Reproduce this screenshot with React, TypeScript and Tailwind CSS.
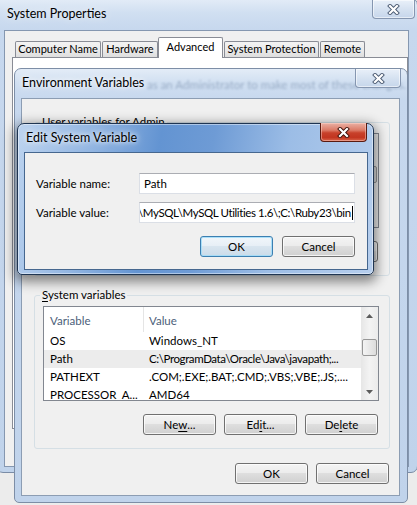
import React from "react";

const btnBase =
  "flex h-[21px] w-[73px] shrink-0 items-center justify-center rounded-[3px] border text-[11.5px] leading-none text-black";
const btnNormal =
  "border-[#707070] bg-[linear-gradient(180deg,#f4f4f4_0%,#ececec_45%,#dedede_50%,#d0d0d0_100%)] shadow-[inset_0_0_0_1px_rgba(255,255,255,0.75)]";
const btnDefault =
  "border-[#3c7fb1] bg-[linear-gradient(180deg,#f1f6fa_0%,#e7eff6_45%,#d8e5ef_50%,#cbdbe9_100%)] shadow-[inset_0_0_0_1px_rgba(160,220,248,0.85)]";

function Button({ children, def }: { children?: React.ReactNode; def?: boolean }) {
  return <div className={`${btnBase} ${def ? btnDefault : btnNormal}`}>{children}</div>;
}

function U({ children }: { children: React.ReactNode }) {
  return <span className="underline underline-offset-[2px]">{children}</span>;
}

function XGlyph({ dark }: { dark: string }) {
  return (
    <svg width="13" height="11" viewBox="0 0 13 11">
      <path d="M3 2 L10 9 M10 2 L3 9" stroke={dark} strokeWidth="4" strokeLinecap="square" fill="none" />
      <path d="M3 2 L10 9 M10 2 L3 9" stroke="#ffffff" strokeWidth="2.2" strokeLinecap="square" fill="none" />
    </svg>
  );
}

function Arrow({ up }: { up?: boolean }) {
  return (
    <svg width="7" height="4" viewBox="0 0 7 4">
      <polygon points={up ? "0,4 7,4 3.5,0" : "0,0 7,0 3.5,4"} fill="#5c5c5c" />
    </svg>
  );
}

type Row = { name: string; value: string; tight?: boolean };

function ListView({ rows, highlight, header }: { rows: Row[]; highlight?: number; header: boolean }) {
  return (
    <div className="flex h-[95px] border border-[#828790] bg-white">
      <div className="flex min-w-0 flex-1 flex-col overflow-hidden">
        {header && (
          <div className="flex h-[25px] shrink-0 text-[#4c607a]">
            <div className="flex h-full w-[100px] shrink-0 items-center border-r border-[#e5e5e5] pl-[6px] pt-[3px]">
              Variable
            </div>
            <div className="flex h-full items-center pl-[5px] pt-[3px]">Value</div>
          </div>
        )}
        {rows.map((r, i) => (
          <div
            key={i}
            className={`flex h-[18px] shrink-0 items-center whitespace-nowrap ${
              i === highlight ? "bg-[#ececec]" : ""
            }`}
          >
            <div className="w-[100px] shrink-0 pl-[6px]">{r.name}</div>
            <div className={`pl-[5px] ${r.tight ? "tracking-[-0.4px]" : ""}`}>{r.value}</div>
          </div>
        ))}
      </div>
      <div className="flex w-[17px] shrink-0 flex-col bg-[linear-gradient(90deg,#e6e6e6_0%,#f3f3f3_50%,#ebebeb_100%)]">
        <div className="flex h-[17px] shrink-0 items-center justify-center">
          <Arrow up />
        </div>
        <div className="flex flex-1 flex-col">
          <div className="mx-[1px] mt-[15px] h-[17px] rounded-[2px] border border-[#979797] bg-[linear-gradient(90deg,#f4f4f4_0%,#e8e8e8_50%,#dcdcdc_100%)]" />
        </div>
        <div className="flex h-[17px] shrink-0 items-center justify-center">
          <Arrow />
        </div>
      </div>
    </div>
  );
}

function VarGroup({
  legend,
  rows,
  highlight,
  header,
  covered,
  className,
}: {
  legend: React.ReactNode;
  rows: Row[];
  highlight?: number;
  header: boolean;
  covered?: boolean;
  className: string;
}) {
  return (
    <fieldset className={`ml-[12px] mr-[9px] rounded-[3px] border border-[#d5dfe5] pb-[13px] pl-[8px] pr-[10px] ${className}`}>
      <legend className="ml-[-3px] px-[2px] text-[11.5px] leading-[14px]">{legend}</legend>
      <div className="mt-[4px]">
        <ListView rows={rows} highlight={highlight} header={header} />
      </div>
      <div className="mr-[1px] mt-[13px] flex justify-end gap-[8px]">
        {covered ? (
          <>
            <Button />
            <Button />
            <Button />
          </>
        ) : (
          <>
            <Button>
              Ne<U>w</U>...
            </Button>
            <Button>
              Ed<U>i</U>t...
            </Button>
            <Button>
              De<U>l</U>ete
            </Button>
          </>
        )}
      </div>
    </fieldset>
  );
}

const inactiveFrame =
  "bg-[linear-gradient(180deg,#e3ecf7_0px,#d0dff1_14px,#c7d8ee_30px,#c0d3eb_100%)]";
const activeFrame =
  "bg-[linear-gradient(100deg,#bcd3ef_0%,#93b6e2_20%,#6394d2_38%,#6e9bd5_52%,#9cbde6_72%,#b6ceed_100%)]";

const inactiveClose =
  "absolute flex h-[19px] items-center justify-center rounded-b-[4px] border border-t-0 border-[#8596b0] bg-[linear-gradient(180deg,#e9f0f9_0%,#d6e2f1_50%,#c6d6eb_100%)] shadow-[inset_0_0_0_1px_rgba(255,255,255,0.55)]";

const tabIdle =
  "flex h-[16px] items-center justify-center rounded-t-[2px] border border-b-0 border-[#898c95] bg-[linear-gradient(180deg,#f3f3f3_0%,#ebebeb_50%,#dedede_100%)] text-[11px]";

export default function App() {
  const sysRows: Row[] = [
    { name: "OS", value: "Windows_NT" },
    { name: "Path", value: "C:\\ProgramData\\Oracle\\Java\\javapath;...", tight: true },
    { name: "PATHEXT", value: ".COM;.EXE;.BAT;.CMD;.VBS;.VBE;.JS;...." },
    { name: "PROCESSOR_A...", value: "AMD64" },
  ];

  return (
    <div className="relative h-[505px] w-[417px] overflow-hidden bg-[#ececec] font-['Lato',sans-serif] text-[11.5px] text-black">
      {/* System Properties window */}
      <div
        className={`absolute left-[-4px] top-[-2px] flex h-[475px] w-[422px] flex-col rounded-[7px] border border-[#7a8ca6] ${inactiveFrame}`}
      >
        <div className="flex h-[31px] shrink-0 items-center pl-[10px] text-[12.5px] text-black [text-shadow:0_0_8px_rgba(255,255,255,0.9)]">
          System Properties
        </div>
        <div className={`${inactiveClose} right-[2px] top-[1px] w-[43px]`}>
          <XGlyph dark="#4b5b73" />
        </div>
        <div className="mb-[5px] ml-[7px] mr-[8px] flex flex-1 flex-col border border-[#8597b0] bg-[#f0f0f0]">
          <div className="flex h-[26px] shrink-0 items-end pl-[10px]">
            <div className={`${tabIdle} w-[86px]`}>Computer Name</div>
            <div className={`${tabIdle} ml-[1px] w-[56px]`}>Hardware</div>
            <div className="relative z-10 mb-[-1px] flex h-[21px] w-[65px] items-center justify-center rounded-t-[2px] border border-b-0 border-[#898c95] bg-white pb-[2px] text-[11px]">
              Advanced
            </div>
            <div className={`${tabIdle} ml-[1px] w-[95px]`}>System Protection</div>
            <div className={`${tabIdle} ml-[1px] w-[45px]`}>Remote</div>
          </div>
          <div className="ml-[7px] h-[372px] shrink-0 border border-[#898c95] bg-white" />
        </div>
      </div>

      {/* Environment Variables window */}
      <div
        className={`absolute left-[14px] top-[68px] flex h-[435px] w-[394px] flex-col rounded-t-[7px] rounded-b-[5px] border border-[#7d8ea6] ${inactiveFrame}`}
      >
        <div className="relative flex h-[29px] shrink-0 items-center overflow-hidden pl-[7px]">
          <span className="pointer-events-none absolute left-[132px] top-[7px] whitespace-nowrap text-[11.5px] text-[#6d84a3] opacity-55 blur-[1.2px]">
            as an Administrator to make most of these changes.
          </span>
          <span className="relative text-[12.5px] [text-shadow:0_0_8px_rgba(255,255,255,0.95),0_0_4px_rgba(255,255,255,0.9)]">
            Environment Variables
          </span>
        </div>
        <div className={`${inactiveClose} right-[6px] top-0 w-[46px]`}>
          <XGlyph dark="#4b5b73" />
        </div>
        <div className="mb-[6px] ml-[6px] mr-[7px] flex flex-1 flex-col border border-[#8c9db3] bg-[#f0f0f0]">
          <VarGroup
            className="mt-[16px]"
            legend={
              <>
                <U>U</U>ser variables for Admin
              </>
            }
            rows={[]}
            header={false}
            covered
          />
          <VarGroup
            className="mt-[12px]"
            legend={
              <>
                <U>S</U>ystem variables
              </>
            }
            rows={sysRows}
            highlight={1}
            header
          />
          <div className="mt-[14px] flex justify-end gap-[8px] pr-[10px]">
            <Button>OK</Button>
            <Button>Cancel</Button>
          </div>
        </div>
      </div>

      {/* Edit System Variable dialog */}
      <div
        className={`absolute left-[17px] top-[123px] flex h-[152px] w-[357px] flex-col rounded-t-[7px] rounded-b-[5px] border border-[#1f3552] ${activeFrame} shadow-[inset_0_0_0_1px_rgba(255,255,255,0.45),0_4px_12px_3px_rgba(0,0,0,0.45)]`}
      >
        <div className="flex h-[28px] shrink-0 items-center pl-[8px] text-[12.5px] [text-shadow:0_0_8px_rgba(255,255,255,0.95),0_0_4px_rgba(255,255,255,0.9)]">
          Edit System Variable
        </div>
        <div className="absolute right-[6px] top-[-1px] flex h-[19px] w-[47px] items-center justify-center rounded-b-[4px] border border-t-0 border-[#5a1a10] bg-[linear-gradient(180deg,#eab1a5_0%,#dc7a66_40%,#c8412b_55%,#c23520_80%,#d9644a_100%)] shadow-[inset_0_0_0_1px_rgba(255,220,210,0.45)]">
          <XGlyph dark="#3d0f08" />
        </div>
        <div className="mb-[4px] ml-[6px] mr-[5px] flex flex-1 flex-col border border-[#46678f] bg-[#f0f0f0] pl-[11px] pr-[12px]">
          <div className="mt-[20px] flex h-[21px] items-center">
            <div className="w-[103px] shrink-0">Variable name:</div>
            <div className="flex h-[21px] w-[217px] items-center border border-[#dbdfe6] border-t-[#abadb3] bg-white pl-[4px]">
              Path
            </div>
          </div>
          <div className="mt-[8px] flex h-[21px] items-center">
            <div className="w-[103px] shrink-0">Variable value:</div>
            <div className="flex h-[21px] w-[217px] items-center overflow-hidden whitespace-nowrap border border-[#dbdfe6] border-t-[#abadb3] bg-white">
              <span className="ml-[-2px] shrink-0 tracking-[-0.4px]">\MySQL\MySQL Utilities 1.6\;C:\Ruby23\bin</span>
              <span className="ml-[1px] h-[14px] w-[1px] shrink-0 bg-black" />
            </div>
          </div>
          <div className="mt-[13px] flex justify-end gap-[9px]">
            <Button def>OK</Button>
            <Button>Cancel</Button>
          </div>
        </div>
      </div>
    </div>
  );
}
